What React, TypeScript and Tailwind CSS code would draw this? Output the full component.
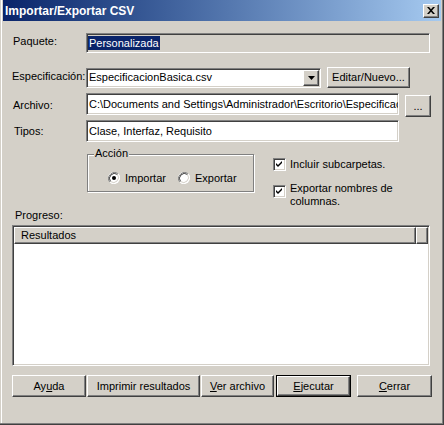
import React from 'react';

// Classic Win2k 3D borders
const sunken =
  'border border-t-[#808080] border-l-[#808080] border-b-white border-r-white shadow-[inset_1px_1px_0_#404040,inset_-1px_-1px_0_#d4d0c8]';
const raised =
  'border border-t-white border-l-white border-b-[#404040] border-r-[#404040] shadow-[inset_-1px_-1px_0_#808080,inset_1px_1px_0_#d4d0c8]';

const Radio = ({ checked }: { checked?: boolean }) => (
  <svg width="12" height="12" viewBox="0 0 12 12" className="shrink-0">
    <circle cx="6" cy="6" r="6" fill="#fff" />
    <path d="M10.2 1.8 A6 6 0 0 0 1.8 10.2" stroke="#808080" strokeWidth="1" fill="none" />
    <path d="M9.5 2.5 A5 5 0 0 0 2.5 9.5" stroke="#404040" strokeWidth="1" fill="none" />
    <path d="M1.8 10.2 A6 6 0 0 0 10.2 1.8" stroke="#fff" strokeWidth="1" fill="none" />
    <path d="M2.5 9.5 A5 5 0 0 0 9.5 2.5" stroke="#d4d0c8" strokeWidth="1" fill="none" />
    {checked && <circle cx="6" cy="6" r="2" fill="#000" />}
  </svg>
);

const Check = () => (
  <div className={`w-[13px] h-[13px] shrink-0 bg-white ${sunken} flex items-center justify-center`}>
    <svg width="7" height="7" viewBox="0 0 7 7">
      <path d="M0 2 L2 4 L6 0 L6 2 L2 6 L0 4 Z" fill="#000" />
    </svg>
  </div>
);

const Button = ({
  children,
  className = '',
  isDefault = false,
}: {
  children: React.ReactNode;
  className?: string;
  isDefault?: boolean;
}) =>
  isDefault ? (
    <div className={`border border-black ${className}`}>
      <div className={`h-full w-full flex items-center justify-center ${raised}`}>{children}</div>
    </div>
  ) : (
    <div className={`flex items-center justify-center ${raised} ${className}`}>{children}</div>
  );

const Label = ({ children, className = '' }: { children: React.ReactNode; className?: string }) => (
  <div className={`w-[83px] shrink-0 pl-[10px] ${className}`}>{children}</div>
);

export default function App() {
  return (
    <div className="w-[444px] h-[425px] bg-[#d4d0c8] border-r border-b border-[#404040] text-[11px] text-black font-['Liberation_Sans',Arial,sans-serif] select-none">
      <div className="h-full border-r border-b border-[#808080] pl-[3px] pr-px shadow-[inset_1px_0_0_#d4d0c8,inset_2px_0_0_#fff]">
        {/* Title bar */}
        <div className="h-[21px] flex items-center justify-between pl-[2px] pr-[2px] bg-gradient-to-r from-[#0a246a] to-[#a6caf0]">
          <span className="text-white font-bold text-[12px] leading-none">Importar/Exportar CSV</span>
          <div className={`w-[16px] h-[14px] bg-[#d4d0c8] flex items-center justify-center ${raised}`}>
            <svg width="8" height="7" viewBox="0 0 8 7">
              <path d="M0 0h2l2 2.2L6 0h2L5 3.5 8 7H6L4 4.8 2 7H0l3-3.5z" fill="#000" />
            </svg>
          </div>
        </div>

        {/* Paquete */}
        <div className="mt-[12px] h-[20px] flex items-center">
          <Label className="-mt-[3px]">Paquete:</Label>
          <div className={`w-[344px] h-[20px] flex items-center pl-px ${sunken}`}>
            <span className="bg-[#0a246a] text-white leading-[14px] px-px">Personalizada</span>
          </div>
        </div>

        {/* Especificación */}
        <div className="mt-[14px] h-[21px] flex items-center">
          <div className="w-[83px] shrink-0 pl-[9px] -mt-[2px]">Especificación:</div>
          <div className={`w-[235px] h-[20px] bg-white flex items-center justify-between pl-[2px] pr-px ${sunken}`}>
            <span>EspecificacionBasica.csv</span>
            <div className={`w-[16px] h-[16px] bg-[#d4d0c8] flex items-center justify-center ${raised}`}>
              <svg width="7" height="4" viewBox="0 0 7 4">
                <path d="M0 0h7L3.5 4z" fill="#000" />
              </svg>
            </div>
          </div>
          <Button className="ml-[6px] w-[83px] h-[21px]">Editar/Nuevo...</Button>
        </div>

        {/* Archivo */}
        <div className="mt-[5px] h-[24px] flex items-start">
          <Label className="mt-[4px]">Archivo:</Label>
          <div className={`w-[313px] h-[22px] bg-white flex items-center pl-[2px] overflow-hidden whitespace-nowrap ${sunken}`}>
            C:\Documents and Settings\Administrador\Escritorio\Especificac
          </div>
          <Button className="ml-[6px] mt-[2px] w-[26px] h-[22px]">...</Button>
        </div>

        {/* Tipos */}
        <div className="mt-[3px] h-[22px] flex items-center">
          <Label className="pl-[11px]">Tipos:</Label>
          <div className={`w-[313px] h-[22px] bg-white flex items-center pl-[2px] ${sunken}`}>
            Clase, Interfaz, Requisito
          </div>
        </div>

        {/* Acción + opciones */}
        <div className="mt-[12px] h-[39px] flex items-start">
          <div className="relative ml-[84px] w-[167px] h-[38px] border border-[#808080] shadow-[1px_1px_0_#fff,inset_1px_1px_0_#fff]">
            <span className="absolute -top-[8px] left-[6px] px-px bg-[#d4d0c8] leading-[13px]">Acción</span>
            <div className="flex items-center mt-[15px] ml-[20px]">
              <Radio checked />
              <span className="ml-[5px]">Importar</span>
              <span className="ml-[12px]">
                <Radio />
              </span>
              <span className="ml-[5px]">Exportar</span>
            </div>
          </div>
          <div className="ml-[19px] mt-[4px] flex flex-col">
            <div className="flex items-center h-[13px]">
              <Check />
              <span className="ml-[4px]">Incluir subcarpetas.</span>
            </div>
            <div className="flex items-start mt-[11px]">
              <div className="mt-[3px]">
                <Check />
              </div>
              <span className="ml-[4px] leading-[13px]">
                Exportar nombres de
                <br />
                columnas.
              </span>
            </div>
          </div>
        </div>

        {/* Progreso */}
        <div className="mt-[16px] leading-[13px] pl-[12px]">Progreso:</div>

        <div className={`mt-[3px] ml-[9px] w-[418px] h-[141px] bg-white ${sunken} p-px`}>
          <div className="flex h-[17px]">
            <div className={`w-[402px] h-full bg-[#d4d0c8] flex items-center pl-[6px] ${raised}`}>Resultados</div>
            <div className={`flex-1 h-full bg-[#d4d0c8] ${raised}`} />
          </div>
        </div>

        {/* Botones */}
        <div className="mt-[9px] flex h-[22px]">
          <Button className="ml-[9px] w-[74px] h-[22px]">
            <span>
              Ay<u>u</u>da
            </span>
          </Button>
          <Button className="ml-px w-[113px] h-[22px]">Imprimir resultados</Button>
          <Button className="ml-px w-[73px] h-[22px]">
            <span>
              <u>V</u>er archivo
            </span>
          </Button>
          <Button isDefault className="ml-[2px] w-[75px] h-[22px]">
            <span>
              <u>E</u>jecutar
            </span>
          </Button>
          <Button className="ml-[6px] w-[75px] h-[22px]">
            <span>
              <u>C</u>errar
            </span>
          </Button>
        </div>
      </div>
    </div>
  );
}
